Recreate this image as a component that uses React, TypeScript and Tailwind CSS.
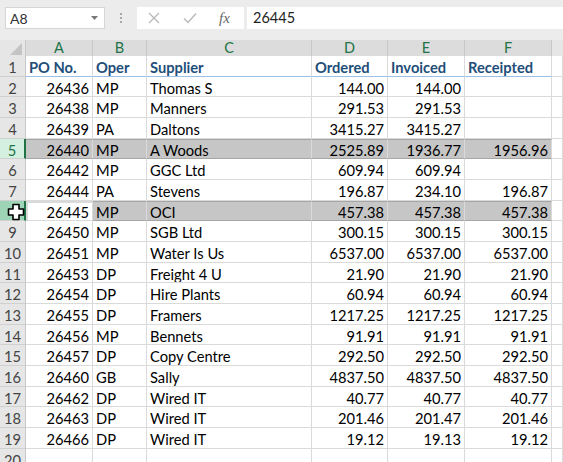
import type { ReactNode } from 'react';

type Row = {
  po: string;
  oper: string;
  supplier: string;
  ordered: string;
  invoiced: string;
  receipted: string;
};

const ROWS: Row[] = [
  { po: '26436', oper: 'MP', supplier: 'Thomas S', ordered: '144.00', invoiced: '144.00', receipted: '' },
  { po: '26438', oper: 'MP', supplier: 'Manners', ordered: '291.53', invoiced: '291.53', receipted: '' },
  { po: '26439', oper: 'PA', supplier: 'Daltons', ordered: '3415.27', invoiced: '3415.27', receipted: '' },
  { po: '26440', oper: 'MP', supplier: 'A Woods', ordered: '2525.89', invoiced: '1936.77', receipted: '1956.96' },
  { po: '26442', oper: 'MP', supplier: 'GGC Ltd', ordered: '609.94', invoiced: '609.94', receipted: '' },
  { po: '26444', oper: 'PA', supplier: 'Stevens', ordered: '196.87', invoiced: '234.10', receipted: '196.87' },
  { po: '26445', oper: 'MP', supplier: 'OCI', ordered: '457.38', invoiced: '457.38', receipted: '457.38' },
  { po: '26450', oper: 'MP', supplier: 'SGB Ltd', ordered: '300.15', invoiced: '300.15', receipted: '300.15' },
  { po: '26451', oper: 'MP', supplier: 'Water Is Us', ordered: '6537.00', invoiced: '6537.00', receipted: '6537.00' },
  { po: '26453', oper: 'DP', supplier: 'Freight 4 U', ordered: '21.90', invoiced: '21.90', receipted: '21.90' },
  { po: '26454', oper: 'DP', supplier: 'Hire Plants', ordered: '60.94', invoiced: '60.94', receipted: '60.94' },
  { po: '26455', oper: 'DP', supplier: 'Framers', ordered: '1217.25', invoiced: '1217.25', receipted: '1217.25' },
  { po: '26456', oper: 'MP', supplier: 'Bennets', ordered: '91.91', invoiced: '91.91', receipted: '91.91' },
  { po: '26457', oper: 'DP', supplier: 'Copy Centre', ordered: '292.50', invoiced: '292.50', receipted: '292.50' },
  { po: '26460', oper: 'GB', supplier: 'Sally', ordered: '4837.50', invoiced: '4837.50', receipted: '4837.50' },
  { po: '26462', oper: 'DP', supplier: 'Wired IT', ordered: '40.77', invoiced: '40.77', receipted: '40.77' },
  { po: '26463', oper: 'DP', supplier: 'Wired IT', ordered: '201.46', invoiced: '201.47', receipted: '201.46' },
  { po: '26466', oper: 'DP', supplier: 'Wired IT', ordered: '19.12', invoiced: '19.13', receipted: '19.12' },
];

// sheet row numbers that are part of the selection
const SELECTED = [5, 8];
const ACTIVE_ROW = 8;

const GRID = 'grid grid-cols-[26px_67px_54px_165px_76px_77px_87px_1fr]';

function Cell(props: {
  children?: ReactNode;
  right?: boolean;
  sel?: boolean;
  className?: string;
}): JSX.Element {
  return (
    <div
      className={`flex items-end overflow-hidden whitespace-nowrap border-r border-b border-[#dadada] pb-[1px] ${
        props.right ? 'justify-end pr-[3px]' : 'pl-[3px]'
      } ${props.sel ? 'bg-[#c6c6c6]' : 'bg-white'} ${props.className ?? ''}`}
    >
      {props.children}
    </div>
  );
}

function RowHeader(props: { n: number; sel?: boolean; active?: boolean }): JSX.Element {
  const tone = props.active
    ? 'bg-[#9fd5b7] text-[#217346] border-r-2 border-r-[#217346]'
    : props.sel
      ? 'bg-[#d3f0e0] text-[#217346] border-r-2 border-r-[#217346]'
      : 'bg-[#e6e6e6] text-[#444] border-r border-r-[#c8c8c8]';
  return (
    <div
      className={`relative flex items-end justify-center border-b border-b-[#d0d0d0] pb-[1px] ${tone}`}
    >
      {props.active ? <CrossCursor /> : props.n}
    </div>
  );
}

function CrossCursor(): JSX.Element {
  return (
    <svg width="18" height="18" viewBox="0 0 18 18" className="absolute left-[7px] top-[2px]">
      <path
        d="M6 1.5h6v4.5h4.5v6H12v4.5H6V12H1.5V6H6z"
        fill="#fff"
        stroke="#000"
        strokeWidth="1.6"
        strokeLinejoin="round"
      />
    </svg>
  );
}

function FormulaBar(): JSX.Element {
  return (
    <div className="flex h-[40px] items-start bg-[#ececec] pt-[7px]">
      <div className="ml-[5px] flex h-[22px] w-[100px] items-center justify-between border border-[#d6d6d6] bg-white pl-[4px] pr-[6px] text-[14px] text-[#333]">
        <span>A8</span>
        <svg width="7" height="4" viewBox="0 0 7 4">
          <path d="M0 0h7L3.5 4z" fill="#777" />
        </svg>
      </div>
      <div className="flex h-[22px] w-[32px] flex-col items-center justify-center gap-[2px]">
        <span className="h-[2px] w-[2px] bg-[#a8a8a8]" />
        <span className="h-[2px] w-[2px] bg-[#a8a8a8]" />
        <span className="h-[2px] w-[2px] bg-[#a8a8a8]" />
      </div>
      <div className="flex h-[22px] w-[107px] items-center bg-white">
        <svg width="12" height="12" viewBox="0 0 12 12" className="ml-[11px]">
          <path d="M1 1l10 10M11 1L1 11" stroke="#b8b8b8" strokeWidth="1.3" fill="none" />
        </svg>
        <svg width="14" height="12" viewBox="0 0 14 12" className="ml-[23px]">
          <path d="M1 6.5l4 4L13 1.5" stroke="#b8b8b8" strokeWidth="1.4" fill="none" />
        </svg>
        <span className="ml-[22px] font-['Liberation_Serif',serif] text-[15px] italic text-[#666]">
          fx
        </span>
      </div>
      <div className="ml-[3px] flex h-[22px] flex-1 items-center bg-white pl-[6px] text-[14.5px] text-[#222]">
        26445
      </div>
    </div>
  );
}

function ColumnHeaders(): JSX.Element {
  const letters = ['A', 'B', 'C', 'D', 'E', 'F'];
  return (
    <div className={`${GRID} h-[16px] text-[14.5px] leading-none`}>
      <div className="relative border-r border-b border-[#c8c8c8] bg-[#e6e6e6]">
        <svg width="12" height="12" viewBox="0 0 12 12" className="absolute right-[3px] bottom-[2px]">
          <path d="M12 0v12H0z" fill="#c4c4c4" />
        </svg>
      </div>
      {letters.map((l) => (
        <div
          key={l}
          className="flex items-center justify-center border-r border-r-[#c8c8c8] border-b-2 border-b-[#217346] bg-[#dcdcdc] pt-[1px] text-[#217346]"
        >
          {l}
        </div>
      ))}
      <div className="border-b border-[#c8c8c8] bg-[#e6e6e6]" />
    </div>
  );
}

export default function App(): JSX.Element {
  return (
    <div className="h-[462px] w-[563px] overflow-hidden bg-white font-['Lato',sans-serif] text-[14.7px] text-black">
      <FormulaBar />
      <ColumnHeaders />
      <div className={`${GRID} auto-rows-[20.68px] leading-none`}>
        <RowHeader n={1} />
        {['PO No.', 'Oper', 'Supplier', 'Ordered', 'Invoiced', 'Receipted'].map((h) => (
          <Cell key={h} className="border-b-[#9bc2e6] font-bold text-[#1f4e79]">
            {h}
          </Cell>
        ))}
        <Cell />

        {ROWS.map((r, i) => {
          const n = i + 2;
          const sel = SELECTED.includes(n);
          const active = n === ACTIVE_ROW;
          const selBorder = sel ? 'border-t border-t-[#a6a6a6] border-b-[#a6a6a6]' : '';
          return (
            <div key={r.po} className="contents">
              <RowHeader n={n} sel={sel} active={active} />
              <Cell
                right
                sel={sel && !active}
                className={active ? 'border-2 border-[#217346] bg-white' : selBorder}
              >
                {r.po}
              </Cell>
              <Cell sel={sel} className={selBorder}>
                {r.oper}
              </Cell>
              <Cell sel={sel} className={selBorder}>
                {r.supplier}
              </Cell>
              <Cell right sel={sel} className={selBorder}>
                {r.ordered}
              </Cell>
              <Cell right sel={sel} className={selBorder}>
                {r.invoiced}
              </Cell>
              <Cell right sel={sel} className={selBorder}>
                {r.receipted}
              </Cell>
              <Cell />
            </div>
          );
        })}

        <RowHeader n={20} />
        <Cell />
        <Cell />
        <Cell />
        <Cell />
        <Cell />
        <Cell />
        <Cell />
      </div>
    </div>
  );
}
